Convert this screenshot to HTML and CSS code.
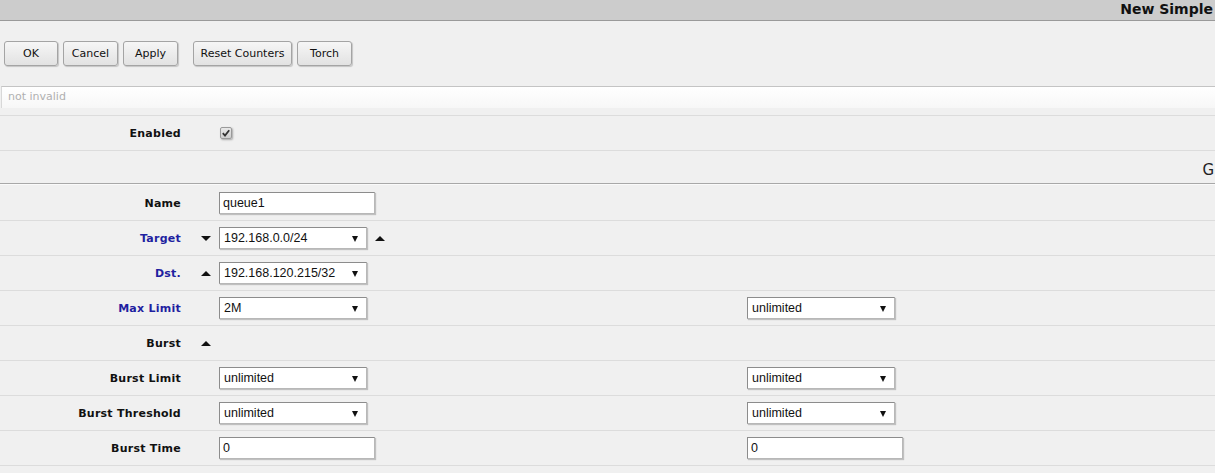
FILE: index.html
```html
<!DOCTYPE html>
<html>
<head>
<meta charset="utf-8">
<link rel="stylesheet" href="styles.css">
</head>
<body>
<div class="page">
  <div class="titlebar"><span class="title">New Simple</span></div>
  <div class="toolbar">
    <button class="btn btn-ok">OK</button>
    <button class="btn">Cancel</button>
    <button class="btn">Apply</button>
    <button class="btn btn-reset">Reset Counters</button>
    <button class="btn">Torch</button>
  </div>
  <div class="status">not invalid</div>
  <div class="form">
    <div class="row">
      <div class="label">Enabled</div>
      <div class="arrows"></div>
      <div class="field"><span class="check"><svg width="8" height="8" viewBox="0 0 8 8"><path d="M0.8 4.2 L3 6.6 L7.2 1.2" fill="none" stroke="#333" stroke-width="1.8"/></svg></span></div>
    </div>
    <div class="row group">
      <div class="group-title">G</div>
    </div>
    <div class="row">
      <div class="label">Name</div>
      <div class="arrows"></div>
      <div class="field"><span class="input">queue1</span></div>
    </div>
    <div class="row">
      <div class="label blue">Target</div>
      <div class="arrows"><span class="tri down"></span></div>
      <div class="field"><span class="select">192.168.0.0/24<span class="caret"></span></span><span class="tri up"></span></div>
    </div>
    <div class="row">
      <div class="label blue">Dst.</div>
      <div class="arrows"><span class="tri up"></span></div>
      <div class="field"><span class="select">192.168.120.215/32<span class="caret"></span></span></div>
    </div>
    <div class="row">
      <div class="label blue">Max Limit</div>
      <div class="arrows"></div>
      <div class="field"><span class="select">2M<span class="caret"></span></span></div>
      <div class="field"><span class="select">unlimited<span class="caret"></span></span></div>
    </div>
    <div class="row">
      <div class="label">Burst</div>
      <div class="arrows"><span class="tri up"></span></div>
      <div class="field"></div>
    </div>
    <div class="row">
      <div class="label">Burst Limit</div>
      <div class="arrows"></div>
      <div class="field"><span class="select">unlimited<span class="caret"></span></span></div>
      <div class="field"><span class="select">unlimited<span class="caret"></span></span></div>
    </div>
    <div class="row">
      <div class="label">Burst Threshold</div>
      <div class="arrows"></div>
      <div class="field"><span class="select">unlimited<span class="caret"></span></span></div>
      <div class="field"><span class="select">unlimited<span class="caret"></span></span></div>
    </div>
    <div class="row">
      <div class="label">Burst Time</div>
      <div class="arrows"></div>
      <div class="field"><span class="input">0</span></div>
      <div class="field"><span class="input">0</span></div>
    </div>
  </div>
</div>
</body>
</html>
```

FILE: styles.css
```css
html, body {
  margin: 0;
  padding: 0;
  background: #f0f0f0;
  overflow: hidden;
}
.page {
  width: 1215px;
  font-family: "DejaVu Sans", Verdana, sans-serif;
  font-size: 11px;
  color: #000;
}
.titlebar {
  height: 21px;
  box-sizing: border-box;
  background: #cccccc;
  border-bottom: 1px solid #9a9a9a;
  display: flex;
  justify-content: flex-end;
  padding-right: 2px;
  white-space: nowrap;
}
.title {
  font-size: 14px;
  font-weight: bold;
  line-height: 19px;
  color: #111;
}
.toolbar {
  display: flex;
  gap: 5px;
  padding: 20px 0 0 4px;
  height: 65px;
  box-sizing: border-box;
}
.btn {
  width: 55px;
  height: 25px;
  padding: 0;
  border: 1px solid #a4a4a4;
  border-radius: 3px;
  background: linear-gradient(#f6f6f6, #e2e2e2);
  box-shadow: 1px 1px 1px rgba(0,0,0,0.18);
  font-family: "DejaVu Sans", Verdana, sans-serif;
  font-size: 11px;
  color: #111;
}
.btn-ok { width: 54px; }
.btn-reset { width: 99px; margin-left: 10px; }
.status {
  margin-left: 1px;
  height: 22px;
  box-sizing: border-box;
  border-top: 1px solid #c4c4c4;
  border-left: 1px solid #d8d8d8;
  background: linear-gradient(#ffffff, #f7f7f7);
  color: #b0b0b0;
  padding-left: 6px;
  line-height: 20px;
}
.form {
  margin-top: 7px;
  border-top: 1px solid #dcdcdc;
}
.row {
  display: grid;
  grid-template-columns: 181px 38px 528px 1fr;
  align-items: center;
  height: 35px;
  border-bottom: 1px solid #dcdcdc;
  box-sizing: border-box;
}
.row.group {
  height: 33px;
  margin-bottom: 2px;
  border-bottom: 1px solid #a8a8a8;
  box-shadow: 0 1px 0 #fafafa;
  display: flex;
  justify-content: flex-end;
  align-items: flex-start;
}
.group-title {
  padding-top: 10px;
  padding-right: 1px;
  font-size: 15px;
  color: #222;
  white-space: nowrap;
}
.label {
  text-align: right;
  font-weight: bold;
  font-size: 11px;
  letter-spacing: 0.25px;
  color: #111;
}
.label.blue { color: #1f1fa0; }
.arrows {
  display: flex;
  justify-content: flex-end;
  padding-right: 8px;
}
.field {
  display: flex;
  align-items: center;
  gap: 8px;
}
.tri {
  width: 0;
  height: 0;
  border-left: 5px solid transparent;
  border-right: 5px solid transparent;
}
.tri.down { border-top: 5px solid #111; }
.tri.up { border-bottom: 5px solid #111; }
.select, .input {
  position: relative;
  display: inline-block;
  box-sizing: border-box;
  height: 22px;
  background: #fff;
  border: 1px solid #8c8c8c;
  border-right-color: #b8b8b8;
  border-bottom-color: #b8b8b8;
  box-shadow: 1px 1px 1px rgba(0,0,0,0.2);
  font-family: "Liberation Sans", Arial, sans-serif;
  font-size: 12.5px;
  line-height: 20px;
  padding-left: 4px;
  color: #111;
}
.select { width: 148px; }
.input { width: 156px; padding-left: 3px; }
.caret {
  position: absolute;
  right: 8px;
  top: 8px;
  width: 0;
  height: 0;
  border-left: 3px solid transparent;
  border-right: 3px solid transparent;
  border-top: 6px solid #111;
}
.check {
  display: inline-flex;
  align-items: center;
  justify-content: center;
  width: 12px;
  height: 12px;
  margin-left: 1px;
  box-sizing: border-box;
  border: 1px solid #9a9a9a;
  border-radius: 2px;
  background: linear-gradient(#e8e8e8, #cfcfcf);
  box-shadow: 1px 1px 2px rgba(0,0,0,0.3);
}
```
